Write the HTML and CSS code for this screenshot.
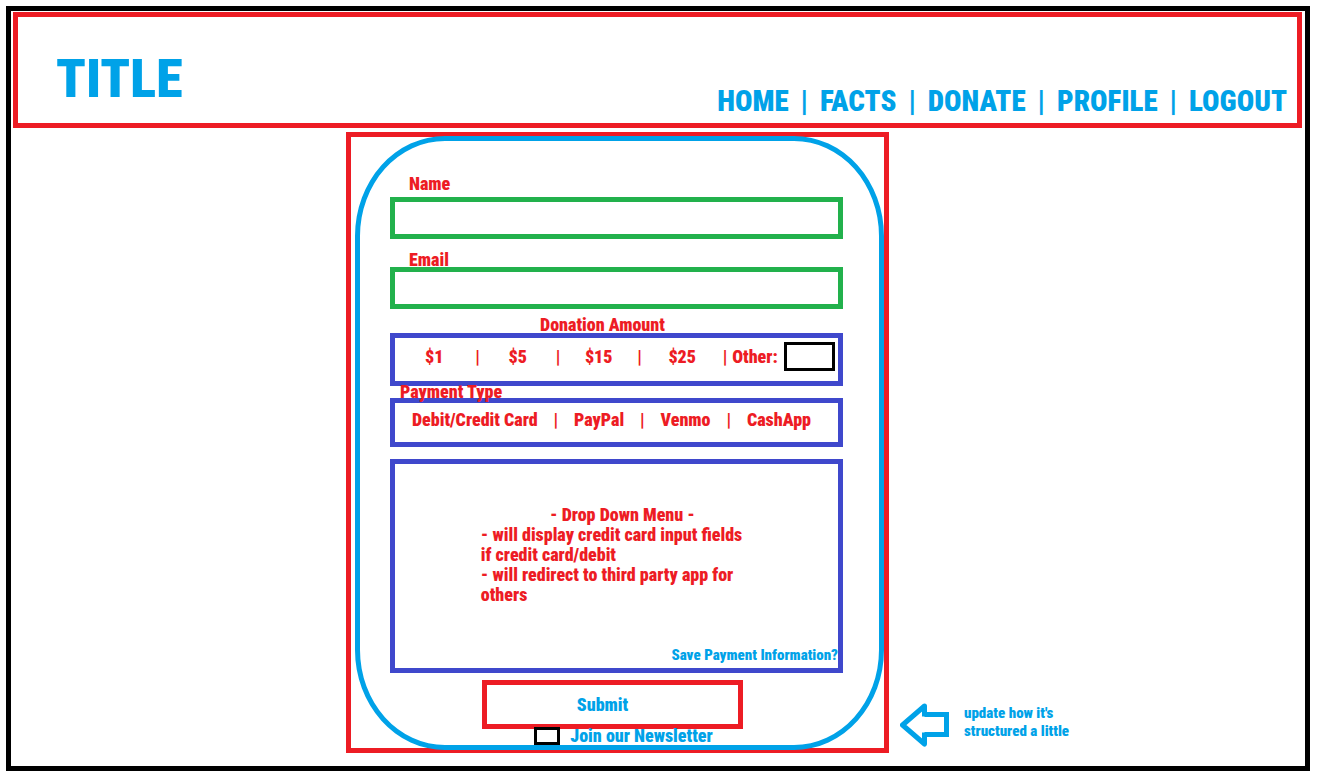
FILE: index.html
```html
<!DOCTYPE html>
<html lang="en">
<head>
<meta charset="utf-8">
<title>Donate</title>
<link rel="stylesheet" href="styles.css">
</head>
<body>
<div class="frame">
  <header class="header">
    <h1 class="title">TITLE</h1>
    <nav class="nav">
      <a href="#home">HOME</a><span>|</span>
      <a href="#facts">FACTS</a><span>|</span>
      <a href="#donate">DONATE</a><span>|</span>
      <a href="#profile">PROFILE</a><span>|</span>
      <a href="#logout">LOGOUT</a>
    </nav>
  </header>
  <main class="main">
    <section class="card">
      <form class="form">
        <label class="label" for="name">Name</label>
        <input class="field" id="name" type="text">
        <label class="label label-email" for="email">Email</label>
        <input class="field" id="email" type="email">
        <h2 class="label label-amount">Donation Amount</h2>
        <div class="box amounts">
          <button type="button">$1</button><span>|</span>
          <button type="button">$5</button><span>|</span>
          <button type="button">$15</button><span>|</span>
          <button type="button">$25</button><span>|</span>
          <div class="other"><label for="other">Other:</label><input id="other" type="text"></div>
        </div>
        <h2 class="label label-type">Payment Type</h2>
        <div class="box types">
          <button type="button">Debit/Credit Card</button><span>|</span>
          <button type="button">PayPal</button><span>|</span>
          <button type="button">Venmo</button><span>|</span>
          <button type="button">CashApp</button>
        </div>
        <div class="box menu">
          <div class="menu-text">
            <h3>- Drop Down Menu -</h3>
            <p>- will display credit card input fields<br>if credit card/debit</p>
            <p>- will redirect to third party app for<br>others</p>
          </div>
          <a class="save" href="#save">Save Payment Information?</a>
        </div>
        <button class="submit" type="submit">Submit</button>
        <div class="news">
          <input id="news" type="checkbox">
          <label for="news">Join our Newsletter</label>
        </div>
      </form>
    </section>
    <aside class="note">
      <svg width="50" height="44" viewBox="0 0 50 44" fill="none" stroke="#00a2e8" stroke-width="5" aria-hidden="true">
        <path d="M24.500 11.500 H46.500 V31.500 H24.500"/>
        <path d="M24.500 13.500 V3 L2.500 22 L24.500 41 V29.500" stroke-linejoin="round"/>
      </svg>
      <p>update how it's<br>structured a little</p>
    </aside>
  </main>
</div>
</body>
</html>
```
FILE: styles.css
```css
* { box-sizing: border-box; }

body {
  margin: 0;
  padding: 6px 19px 9px 6px;
  background: #fff;
  color: #ed1c24;
  font-family: "Liberation Sans Narrow", "Arial Narrow", "Roboto Condensed", "Open Sans Condensed", "Liberation Sans", sans-serif;
  font-size: 18px;
  font-weight: 900;
  line-height: 20px;
}

h1, h2, h3, p { margin: 0; font: inherit; }

button, input { font: inherit; color: inherit; background: #fff; border-radius: 0; }

button { padding: 0; border: 0; background: none; cursor: pointer; }

a { color: inherit; text-decoration: none; }

.frame {
  min-height: calc(100vh - 15px);
  padding: 1px 3px 13px 2px;
  border: 5px solid #000;
}

.header {
  display: flex;
  justify-content: space-between;
  align-items: flex-end;
  min-height: 116px;
  padding: 0 10px 6px 38px;
  border: 5px solid #ed1c24;
  color: #00a2e8;
}

.title { padding-bottom: 5px; font-size: 54px; line-height: 66px; }

.nav {
  display: flex;
  gap: 12px;
  font-size: 29px;
  line-height: 32px;
}

.main {
  display: grid;
  grid-template-columns: minmax(0, 333fr) 543px minmax(0, 413fr);
  margin-top: 4px;
}

.card {
  grid-column: 2;
  padding-left: 4px;
  border: 5px solid #ed1c24;
}

.form {
  display: flex;
  flex-direction: column;
  margin: -1px 0 -2px;
  padding: 33px 36px 0 30px;
  border: 5px solid #00a2e8;
  border-radius: 90px / 100px;
}

.label { padding-left: 19px; }

.field {
  width: 100%;
  height: 42px;
  margin-top: 3px;
  padding: 0 12px;
  border: 5px solid #22b14c;
}

.label-email { margin: 11px 0 -6px; }

.label-amount { margin: 6px 0 -2px; padding: 0 28px 0 0; text-align: center; }

.label-type { position: relative; z-index: 1; margin: -4px 0 -4px; padding-left: 10px; }

.box { border: 5px solid #3f48cc; }

.amounts {
  display: grid;
  grid-template-columns: 78fr 8px 72fr 8px 73fr 8px 77fr 8px 109px;
  align-items: center;
  justify-items: center;
  min-height: 53px;
  padding: 3px 0 9px;
}

.other { display: flex; align-items: center; gap: 6px; }

.other input { width: 51px; height: 29px; padding: 0 4px; border: 3px solid #000; }

.types {
  display: flex;
  justify-content: space-between;
  align-items: center;
  min-height: 49px;
  padding: 0 27px 5px 17px;
}

.menu {
  display: flex;
  flex-direction: column;
  justify-content: space-between;
  min-height: 214px;
  margin-top: 12px;
  padding: 41px 0 3px;
}

.menu-text { align-self: center; margin-right: 10px; }

.menu-text h3 { padding-left: 22px; text-align: center; }

.save {
  align-self: flex-end;
  color: #00a2e8;
  font-size: 15px;
}

.submit {
  align-self: center;
  width: 261px;
  height: 49px;
  margin: 7px 8px 0 0;
  padding-right: 20px;
  border: 5px solid #ed1c24;
  color: #00a2e8;
}

.news {
  display: flex;
  align-items: center;
  align-self: center;
  gap: 10px;
  height: 18px;
  margin-top: -2px;
  padding-left: 14px;
  color: #00a2e8;
}

.news input {
  appearance: none;
  width: 26px;
  height: 18px;
  margin: 0;
  border: 3px solid #000;
}

.news input:checked { background: #00a2e8; }

.note {
  display: flex;
  align-items: center;
  align-self: end;
  gap: 14px;
  padding: 0 0 6px 11px;
  color: #00a2e8;
  font-size: 15px;
  line-height: 18px;
}

.note svg { flex: none; }

.note p { padding-bottom: 6px; }
```
